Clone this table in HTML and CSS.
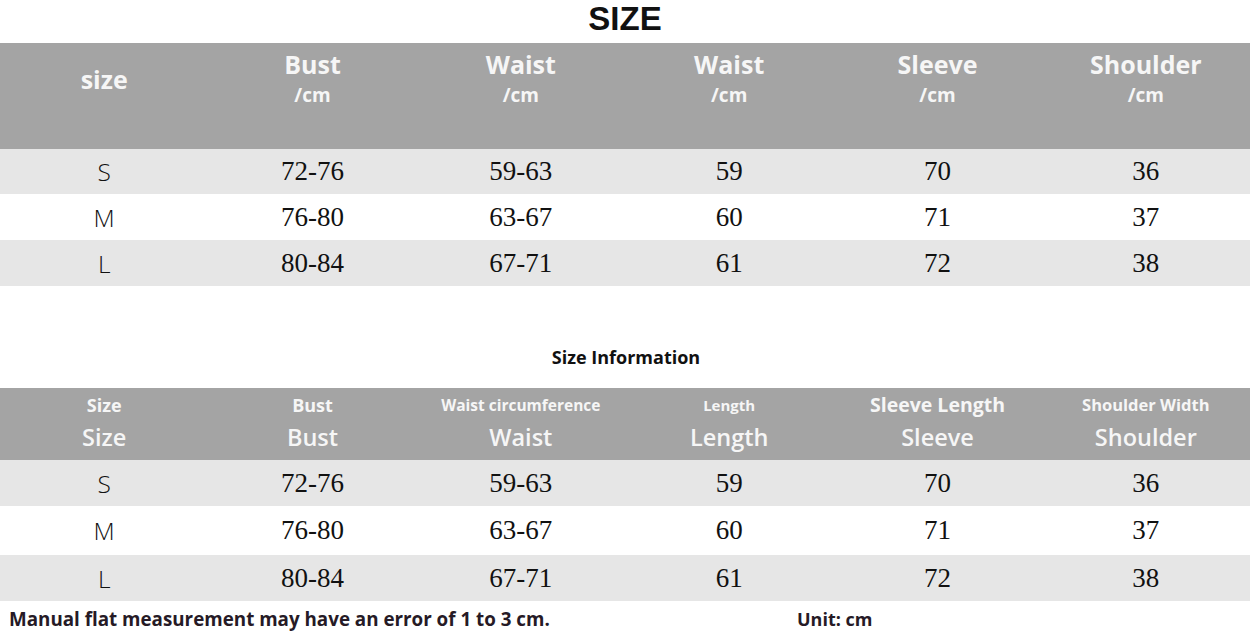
FILE: index.html
```html
<!DOCTYPE html>
<html lang="en">
<head>
<meta charset="utf-8">
<title>Size chart</title>
<link rel="stylesheet" href="styles.css">
</head>
<body>
<div class="page">
  <h1 class="title">SIZE</h1>

  <div class="table t1">
    <div class="head">
      <div class="hcell"><span class="h-main">size</span></div>
      <div class="hcell"><span class="h-main">Bust</span><span class="h-unit">/cm</span></div>
      <div class="hcell"><span class="h-main">Waist</span><span class="h-unit">/cm</span></div>
      <div class="hcell"><span class="h-main">Waist</span><span class="h-unit">/cm</span></div>
      <div class="hcell"><span class="h-main">Sleeve</span><span class="h-unit">/cm</span></div>
      <div class="hcell"><span class="h-main">Shoulder</span><span class="h-unit">/cm</span></div>
    </div>
    <div class="row shade r1">
      <div class="cell size">S</div><div class="cell num">72-76</div><div class="cell num">59-63</div><div class="cell num">59</div><div class="cell num">70</div><div class="cell num">36</div>
    </div>
    <div class="row r2">
      <div class="cell size">M</div><div class="cell num">76-80</div><div class="cell num">63-67</div><div class="cell num">60</div><div class="cell num">71</div><div class="cell num">37</div>
    </div>
    <div class="row shade r3">
      <div class="cell size">L</div><div class="cell num">80-84</div><div class="cell num">67-71</div><div class="cell num">61</div><div class="cell num">72</div><div class="cell num">38</div>
    </div>
  </div>

  <h2 class="subtitle">Size Information</h2>

  <div class="table t2">
    <div class="head">
      <div class="hcell"><span class="s-lab s18">Size</span><span class="b-lab">Size</span></div>
      <div class="hcell"><span class="s-lab s18">Bust</span><span class="b-lab">Bust</span></div>
      <div class="hcell"><span class="s-lab s155">Waist circumference</span><span class="b-lab">Waist</span></div>
      <div class="hcell"><span class="s-lab s15">Length</span><span class="b-lab">Length</span></div>
      <div class="hcell"><span class="s-lab s20">Sleeve Length</span><span class="b-lab">Sleeve</span></div>
      <div class="hcell"><span class="s-lab s165">Shoulder Width</span><span class="b-lab">Shoulder</span></div>
    </div>
    <div class="row shade r1">
      <div class="cell size">S</div><div class="cell num">72-76</div><div class="cell num">59-63</div><div class="cell num">59</div><div class="cell num">70</div><div class="cell num">36</div>
    </div>
    <div class="row r2">
      <div class="cell size">M</div><div class="cell num">76-80</div><div class="cell num">63-67</div><div class="cell num">60</div><div class="cell num">71</div><div class="cell num">37</div>
    </div>
    <div class="row shade r3">
      <div class="cell size">L</div><div class="cell num">80-84</div><div class="cell num">67-71</div><div class="cell num">61</div><div class="cell num">72</div><div class="cell num">38</div>
    </div>
  </div>

  <div class="footer">
    <span class="note">Manual flat measurement may have an error of 1 to 3 cm.</span>
    <span class="unit">Unit: cm</span>
  </div>
</div>
</body>
</html>
```

FILE: styles.css
```css
* { box-sizing: border-box; }
html, body { margin: 0; padding: 0; background: #ffffff; }
body { font-family: "Open Sans", "Noto Sans", sans-serif; }

.page { width: 1252px; height: 636px; overflow: hidden; }

.title {
  margin: 0;
  height: 43px;
  font-family: "Liberation Sans", Arial, sans-serif;
  font-weight: 700;
  font-size: 33px;
  line-height: normal;
  text-align: center;
  color: #111111;
  padding-right: 2px;
}

.table { width: 1250px; }

.head {
  display: grid;
  grid-template-columns: repeat(6, 1fr);
  background: #a4a4a4;
  color: #f6f6f6;
}

.row {
  display: grid;
  grid-template-columns: repeat(6, 1fr);
  align-items: center;
  background: #ffffff;
}
.row.shade { background: #e6e6e6; }

.hcell {
  display: flex;
  flex-direction: column;
  align-items: center;
  justify-content: center;
}

/* table 1 header */
.t1 .head { height: 106px; padding-bottom: 40px; padding-top: 6px; }
.h-main { font-weight: 700; font-size: 25px; line-height: 31px; }
.h-unit { font-weight: 700; font-size: 19px; line-height: 30px; }

.t1 .r1 { height: 45px; }
.t1 .r2 { height: 46px; }
.t1 .r3 { height: 46px; }

.cell { text-align: center; color: #111111; }
.cell.size {
  font-family: "Open Sans", "Noto Sans", sans-serif;
  font-weight: 300;
  font-size: 24.5px;
}
.cell.num {
  font-family: "Liberation Serif", "Times New Roman", serif;
  font-size: 27px;
}

.subtitle {
  margin: 0;
  height: 102px;
  padding-top: 58px;
  font-weight: 700;
  font-size: 18px;
  line-height: 26px;
  text-align: center;
  color: #111111;
}

/* table 2 header */
.t2 .head { height: 72px; padding-top: 0; padding-bottom: 4px; }
.s-lab { font-weight: 700; line-height: 30px; }
.s15 { font-size: 15px; }
.s155 { font-size: 15.5px; }
.s165 { font-size: 16.5px; }
.s18 { font-size: 18px; }
.s20 { font-size: 19.5px; }
.b-lab { font-weight: 600; font-size: 23.5px; line-height: 34px; }

.t2 .r1 { height: 46px; }
.t2 .r2 { height: 49px; }
.t2 .r3 { height: 46px; }

.footer {
  display: flex;
  align-items: center;
  height: 35px;
  padding-left: 9px;
  color: #261a26;
  font-weight: 700;
}
.note { font-size: 18.8px; width: 788px; }
.unit { font-size: 18px; }
```
